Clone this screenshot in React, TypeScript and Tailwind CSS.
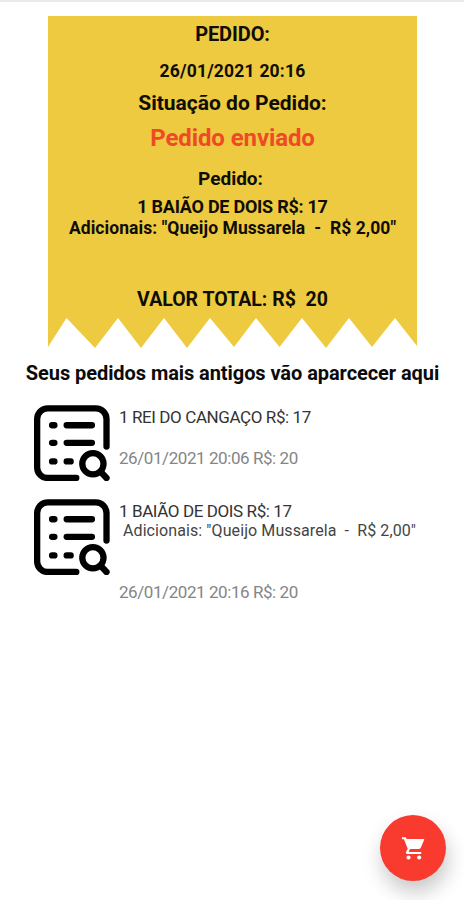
const OLD_ORDERS = [
  {
    id: 1,
    item: "1 REI DO CANGAÇO R$: 17",
    extras: "",
    summary: "26/01/2021 20:06 R$: 20",
  },
  {
    id: 2,
    item: "1 BAIÃO DE DOIS R$: 17",
    extras: 'Adicionais: "Queijo Mussarela  -  R$ 2,00"',
    summary: "26/01/2021 20:16 R$: 20",
  },
];

function OrderIcon() {
  return (
    <svg
      viewBox="42 28 228 229"
      className="h-[76px] w-[76px] shrink-0"
      fill="none"
      stroke="#000"
      strokeWidth="19"
      strokeLinecap="round"
      strokeLinejoin="round"
    >
      <path d="M260 153V70a32 32 0 0 0-32-32H83a32 32 0 0 0-32 32v146a32 32 0 0 0 32 32h86" />
      <path d="M96 89h7M140 89h76M96 142h7M140 142h76M96 198h7M140 198h12" />
      <circle cx="219" cy="205" r="32" />
      <path d="M243 230l17 18" />
    </svg>
  );
}

function CartIcon() {
  return (
    <svg viewBox="0 0 23 23" className="h-[23px] w-[23px]" fill="currentColor">
      <path d="M0 .2H3.700L4.800 2H21.500Q22.600 2 22.100 3.100L18.900 10.600Q18.300 12 17 12H8L6.600 14.900H19.200V17H5.400Q3.300 16.800 4 14.900L5.700 11.700L2 2.300H0Z" />
      <circle cx="6.500" cy="20.500" r="2.100" />
      <circle cx="17.200" cy="20.500" r="2.100" />
    </svg>
  );
}

function Receipt() {
  return (
    <section className="mx-auto w-[369px] text-center font-bold whitespace-pre text-[#100d04]">
      <div className="flex h-[302px] flex-col items-center bg-[#edca40] pl-px">
        <h1 className="mt-1 text-[20px] leading-[28px] tracking-[-0.1px]">PEDIDO:</h1>
        <p className="mt-[10px] text-[17.5px] leading-[26px] tracking-[0.2px]">26/01/2021 20:16</p>
        <h2 className="mt-[4px] text-[21px] leading-[30px]">Situação do Pedido:</h2>
        <p className="mt-[4px] text-[24px] leading-[32px] tracking-[-0.1px] text-[#ee4a27]">Pedido enviado</p>
        <h2 className="mt-[13px] pr-1 text-[19px] leading-[24px]">Pedido:</h2>
        <p className="mt-[6px] text-[18px] leading-[20px] tracking-[-0.25px]">1 BAIÃO DE DOIS R$: 17</p>
        <p className="mt-px text-[17.5px] leading-[20px] tracking-[0.07px]">{'Adicionais: "Queijo Mussarela  -  R$ 2,00"'}</p>
        <p className="mt-[48px] text-[19.5px] leading-[28px]">VALOR TOTAL: R$  20</p>
      </div>
      {/* torn paper edge */}
      <svg viewBox="0 0 369 30" className="block h-[30px] w-[369px]" fill="#edca40">
        <path d="M0 0H369V28L347 0L324 29L301 0L278 30L254 0L231.500 29L208 0L186 29L162 0L139 30L116 0L93 30L70 0L47 30L18.500 0L0 29Z" />
      </svg>
    </section>
  );
}

export default function App() {
  return (
    <div className="relative flex h-[900px] w-[464px] flex-col overflow-hidden bg-white font-['Roboto',sans-serif]">
      <div className="mb-[14px] h-[2px] shrink-0 bg-[#ebebeb]" />
      <Receipt />

      <h2 className="mt-[11px] pl-px text-center text-[20px] leading-[28px] font-bold tracking-[-0.07px] whitespace-pre text-[#0b0b0b]">
        Seus pedidos mais antigos vão aparcecer aqui
      </h2>

      <ul className="mt-[18px] flex flex-col gap-[18px] pl-[34px]">
        {OLD_ORDERS.map((order) => (
          <li key={order.id} className="flex gap-[9px]">
            <OrderIcon />
            <div className="flex flex-col pt-[2px] whitespace-pre">
              <p className="text-[17px] leading-[20px] tracking-[-0.4px] text-[#333]">{order.item}</p>
              {order.extras && (
                <p className="pl-[4px] text-[16px] leading-[20px] tracking-[0.09px] text-[#444]">{order.extras}</p>
              )}
              <p className={order.extras ? "mt-[41px] text-[17px] leading-[20px] tracking-[-0.43px] text-[#858585]" : "mt-[21px] text-[17px] leading-[20px] tracking-[-0.43px] text-[#858585]"}>
                {order.summary}
              </p>
            </div>
          </li>
        ))}
      </ul>

      <button
        aria-label="Carrinho"
        className="absolute right-[18px] bottom-[19px] flex h-[66px] w-[66px] items-center justify-center rounded-full bg-[#f93a2e] text-white shadow-[2px_11px_20px_rgba(0,0,0,0.22)]"
      >
        <CartIcon />
      </button>
    </div>
  );
}
